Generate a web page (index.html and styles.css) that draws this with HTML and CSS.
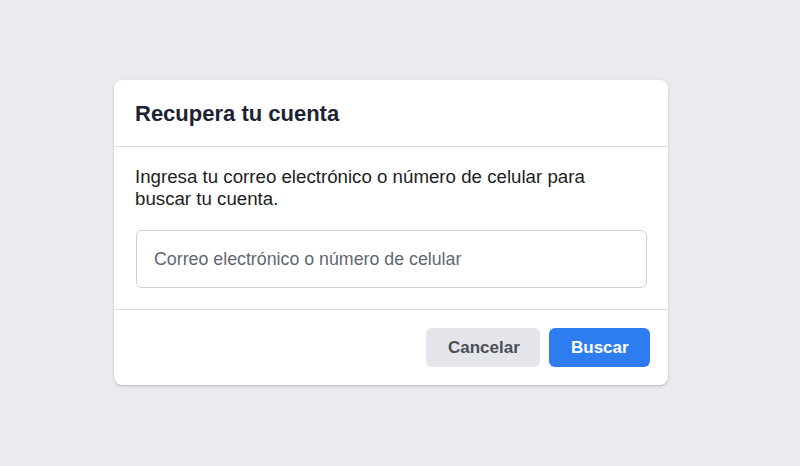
FILE: index.html
```html
<!DOCTYPE html>
<html lang="es">
<head>
<meta charset="utf-8">
<link rel="stylesheet" href="styles.css">
</head>
<body>
<div class="page">
  <div class="card">
    <div class="card-header">
      <h2 class="title">Recupera tu cuenta</h2>
    </div>
    <div class="card-body">
      <p class="desc">Ingresa tu correo electrónico o número de celular para buscar tu cuenta.</p>
      <input class="field" type="text" placeholder="Correo electrónico o número de celular">
    </div>
    <div class="card-footer">
      <button class="btn btn-cancel">Cancelar</button>
      <button class="btn btn-primary">Buscar</button>
    </div>
  </div>
</div>
</body>
</html>
```
FILE: styles.css
```css
* { box-sizing: border-box; }
html, body { margin: 0; padding: 0; }
body {
  background: #e9ebee;
  font-family: "Liberation Sans", Arial, sans-serif;
  width: 800px;
  height: 466px;
}
.page {
  padding-top: 80px;
  padding-left: 114px;
}
.card {
  width: 554px;
  background: #fff;
  border-radius: 8px;
  box-shadow: 0 1px 3px rgba(0,0,0,0.18), 0 1px 1px rgba(0,0,0,0.06);
}
.card-header {
  padding: 21px 21px 19px;
  border-bottom: 1px solid #dddfe2;
}
.title {
  margin: 0;
  font-size: 22px;
  line-height: 26px;
  font-weight: bold;
  color: #1c2333;
}
.card-body {
  padding: 19px 21px 21px 21px;
  border-bottom: 1px solid #dddfe2;
}
.desc {
  margin: 0 0 20px;
  font-size: 18.7px;
  line-height: 22px;
  color: #1c1e21;
  padding-right: 40px;
}
.field {
  display: block;
  width: 511px;
  height: 58px;
  margin-left: 1px;
  border: 1px solid #ccd0d5;
  border-radius: 6px;
  padding: 0 17px;
  font-family: "Liberation Sans", Arial, sans-serif;
  font-size: 17.8px;
  color: #1c1e21;
  outline: none;
}
.field::placeholder { color: #606770; }
.card-footer {
  display: flex;
  justify-content: flex-end;
  gap: 9px;
  padding: 18px 18px 18px;
}
.btn {
  height: 39px;
  border: none;
  border-radius: 6px;
  font-family: "Liberation Sans", Arial, sans-serif;
  font-size: 17px;
  font-weight: bold;
  padding: 0 22px;
}
.btn-cancel {
  background: #e4e6eb;
  color: #4b4f56;
  width: 114px;
}
.btn-primary {
  background: #2d7cf0;
  color: #fff;
  width: 101px;
}
```
